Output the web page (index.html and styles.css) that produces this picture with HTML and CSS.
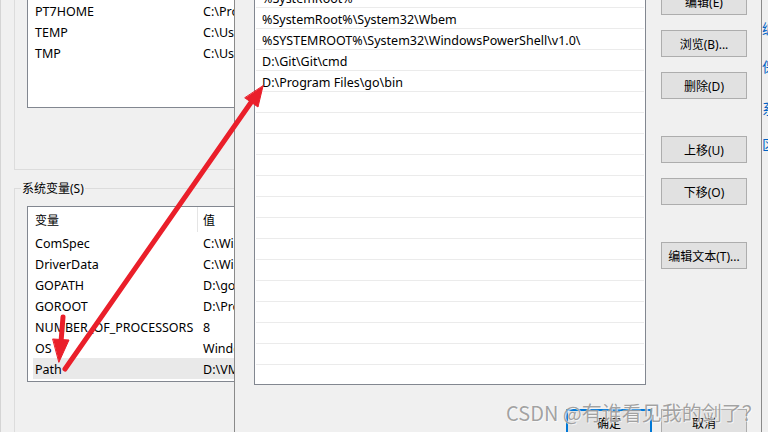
FILE: index.html
```html
<!DOCTYPE html>
<html lang="zh-CN">
<head>
    <meta charset="UTF-8">
    <meta name="viewport" content="width=device-width, initial-scale=1.0">
    <title>编辑环境变量</title>
    <link rel="stylesheet" href="styles.css">
</head>
<body>
    <div class="desktop">
        <!-- environment variables window (behind) -->
        <div class="env-window">
            <div class="group user-group">
                <div class="listbox user-list">
                    <div class="lv-row"><span class="lv-name">PT7HOME</span><span class="lv-value">C:\Program Files</span></div>
                    <div class="lv-row"><span class="lv-name">TEMP</span><span class="lv-value">C:\Users\AppData</span></div>
                    <div class="lv-row"><span class="lv-name">TMP</span><span class="lv-value">C:\Users\AppData</span></div>
                </div>
            </div>

            <fieldset class="group sys-group">
                <legend>系统变量(S)</legend>
                <div class="listbox sys-list">
                    <div class="lv-head">
                        <span class="head-name">变量</span>
                        <span class="head-value">值</span>
                    </div>
                    <div class="lv-row"><span class="lv-name">ComSpec</span><span class="lv-value">C:\Windows\system32\cmd.exe</span></div>
                    <div class="lv-row"><span class="lv-name">DriverData</span><span class="lv-value">C:\Windows\System32\Drivers</span></div>
                    <div class="lv-row"><span class="lv-name">GOPATH</span><span class="lv-value">D:\go</span></div>
                    <div class="lv-row"><span class="lv-name">GOROOT</span><span class="lv-value">D:\Program Files\go</span></div>
                    <div class="lv-row"><span class="lv-name">NUMBER_OF_PROCESSORS</span><span class="lv-value">8</span></div>
                    <div class="lv-row"><span class="lv-name">OS</span><span class="lv-value">Windows_NT</span></div>
                    <div class="lv-row selected"><span class="lv-name">Path</span><span class="lv-value">D:\VMware\bin</span></div>
                </div>
            </fieldset>
        </div>

        <!-- settings window on the right (behind) -->
        <div class="side-window">
            <a class="side-link">编辑</a>
            <a class="side-link">保存</a>
            <a class="side-link">系统</a>
            <a class="side-link">区域</a>
        </div>

        <!-- edit environment variable dialog -->
        <div class="edit-dialog">
            <div class="path-list">
                <div class="path-row">%SystemRoot%</div>
                <div class="path-row">%SystemRoot%\System32\Wbem</div>
                <div class="path-row">%SYSTEMROOT%\System32\WindowsPowerShell\v1.0\</div>
                <div class="path-row">D:\Git\Git\cmd</div>
                <div class="path-row">D:\Program Files\go\bin</div>
                <div class="path-row"></div>
                <div class="path-row"></div>
                <div class="path-row"></div>
                <div class="path-row"></div>
                <div class="path-row"></div>
                <div class="path-row"></div>
                <div class="path-row"></div>
                <div class="path-row"></div>
                <div class="path-row"></div>
                <div class="path-row"></div>
                <div class="path-row"></div>
                <div class="path-row"></div>
                <div class="path-row"></div>
                <div class="path-row"></div>
            </div>

            <div class="side-buttons">
                <button class="win-button first">新建(N)</button>
                <button class="win-button">编辑(E)</button>
                <button class="win-button">浏览(B)...</button>
                <button class="win-button">删除(D)</button>
                <button class="win-button spaced">上移(U)</button>
                <button class="win-button">下移(O)</button>
                <button class="win-button spaced">编辑文本(T)...</button>
            </div>

            <div class="dialog-actions">
                <button class="win-button default">确定</button>
                <button class="win-button">取消</button>
            </div>
        </div>

        <!-- red annotation arrows -->
        <svg class="marks" width="768" height="432" viewBox="0 0 768 432">
            <g fill="#ea1f2a" stroke="#ea1f2a" stroke-width="5" stroke-linecap="round">
                <line x1="64" y1="369" x2="251" y2="101"/>
                <polygon stroke-width="1" points="262,86 257,107 244,98"/>
                <line x1="62" y1="317" x2="60" y2="342"/>
                <polygon stroke-width="1" points="58,362 68,340 52,339"/>
            </g>
        </svg>

        <div class="watermark">CSDN @有谁看见我的剑了？</div>
    </div>
</body>
</html>
```

FILE: styles.css
```css
* {
    box-sizing: border-box;
}

body {
    margin: 0;
    font-family: "Noto Sans", "Noto Sans CJK SC", sans-serif;
    font-size: 12.5px;
    color: #000;
    background-color: #f0f0f0;
}

.desktop {
    position: relative;
    width: 768px;
    height: 432px;
    overflow: hidden;
    background-color: #f0f0f0;
    border-left: 1px solid #d4d4d4;
}

/* back window */
.env-window {
    width: 420px;
    padding-left: 13px;
}

.group {
    border: 1px solid #dcdcdc;
}

.user-group {
    margin-top: -30px;
    padding: 28px 12px 61px 12px;
}

.listbox {
    background-color: #fff;
    border: 1px solid #828790;
    overflow: hidden;
}

.user-list {
    height: 109px;
}

.sys-group {
    margin: 10px 0 0 0;
    padding: 9px 12px 60px 12px;
    min-inline-size: 0;
}

.sys-group legend {
    margin-left: -6px;
    padding: 0 1px;
    line-height: 17px;
    font-size: 12px;
}

.sys-list {
    height: 176px;
}

.lv-head {
    display: grid;
    grid-template-columns: 165px 1fr;
    height: 25px;
    margin-left: 5px;
    font-size: 12px;
}

.head-name {
    display: flex;
    align-items: center;
    padding-left: 2px;
    border-right: 1px solid #e5e5e5;
}

.head-value {
    display: flex;
    align-items: center;
    padding-left: 5px;
}

.lv-row {
    display: grid;
    grid-template-columns: 170px 1fr;
    align-items: center;
    height: 21px;
    margin-left: 5px;
    padding-top: 1px;
    white-space: nowrap;
}

.lv-row.selected {
    background-color: #e9e9e9;
}

.lv-name {
    padding-left: 2px;
}

/* right window */
.side-window {
    position: absolute;
    left: 761px;
    top: 0;
    width: 80px;
    height: 432px;
    display: flex;
    flex-direction: column;
    padding-top: 18px;
    font-family: "Noto Sans CJK SC", sans-serif;
    font-size: 14px;
}

.side-link {
    color: #0063c4;
    line-height: 20px;
    white-space: nowrap;
}

.side-link:nth-child(2) { margin-top: 18px; }
.side-link:nth-child(3) { margin-top: 22px; }
.side-link:nth-child(4) { margin-top: 16px; }

/* front dialog */
.edit-dialog {
    position: absolute;
    left: 233px;
    top: -15px;
    width: 528px;
    height: 470px;
    display: grid;
    grid-template-columns: 392px 86px;
    grid-template-rows: auto 1fr;
    column-gap: 15px;
    align-items: start;
    padding: 0 14px 0 19px;
    background-color: #f0f0f0;
    border: 1px solid #8a8a8a;
}

.path-list {
    height: 399px;
    background-color: #fff;
    border: 1px solid #828790;
    overflow: hidden;
}

.path-row {
    height: 21px;
    margin: 0 1px;
    padding: 2px 0 0 6px;
    line-height: 20px;
    border-bottom: 1px solid #ebebeb;
    white-space: nowrap;
}

.side-buttons {
    display: flex;
    flex-direction: column;
    gap: 15px;
}

.win-button {
    width: 86px;
    height: 27px;
    padding: 0;
    font-family: "Noto Sans", "Noto Sans CJK SC", sans-serif;
    font-size: 12px;
    color: #000;
    background-color: #e1e1e1;
    border: 1px solid #adadad;
}

.win-button.first {
    margin-top: -40px;
}

.win-button.spaced {
    margin-top: 22px;
}

.win-button.default {
    border: 2px solid #0078d7;
}

.dialog-actions {
    grid-column: 1 / -1;
    display: flex;
    justify-content: flex-end;
    gap: 9px;
    margin-top: 24px;
}

/* overlays */
.marks {
    position: absolute;
    left: 0;
    top: 0;
}

.watermark {
    position: absolute;
    left: 505px;
    top: 399px;
    font-family: "Noto Sans CJK SC", sans-serif;
    font-size: 20px;
    line-height: 28px;
    color: rgba(100, 100, 100, 0.6);
    text-shadow: 0 0 1px #fff, 1px 1px 0 rgba(255, 255, 255, 0.6);
    white-space: nowrap;
}
```
